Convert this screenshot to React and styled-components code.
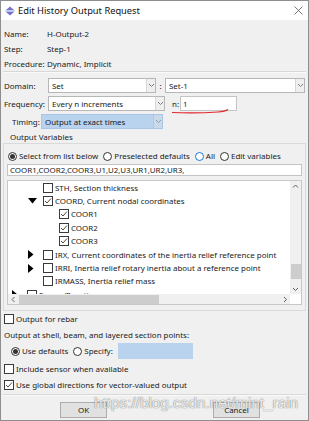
import styled, { createGlobalStyle } from "styled-components";

const GlobalStyle = createGlobalStyle`
  html, body { margin: 0; padding: 0; background: #ffffff; }
  body { font-family: "Noto Sans", "Noto Sans CJK SC", sans-serif; }
  * { box-sizing: border-box; }
`;

const Window = styled.div`
  position: relative;
  width: 309px;
  height: 421px;
  border: 1px solid #8e8e8e;
  background: #f0f0f0;
  display: flex;
  flex-direction: column;
  overflow: hidden;
  font-size: 7.95px;
  color: #1a1a1a;
`;

const TitleBar = styled.div`
  height: 19px;
  flex: none;
  background: #ffffff;
  display: flex;
  align-items: center;
  padding: 0 5px 0 4px;
  gap: 3px;
  font-size: 9.3px;
  color: #111;
`;

const TitleText = styled.span`
  flex: 1;
`;

const Body = styled.div`
  flex: 1;
  display: flex;
  flex-direction: column;
  padding: 0 2px;
`;

const Info = styled.div`
  margin-top: 6px;
  display: flex;
  flex-direction: column;
`;

const InfoRow = styled.div`
  height: 15px;
  display: flex;
  align-items: center;
  padding-left: 1px;
`;

const Label = styled.span`
  flex: none;
  width: ${(p) => p.$w}px;
`;

const Separator = styled.div`
  height: 0;
  border-top: 1px solid #d8d8d8;
  border-bottom: 1px solid #fafafa;
  margin-top: ${(p) => p.$mt || 0}px;
`;

const FieldRow = styled.div`
  height: 15px;
  display: flex;
  align-items: center;
  margin-top: ${(p) => p.$mt || 3}px;
  padding-left: ${(p) => p.$pl || 1}px;
`;

const Combo = styled.div`
  flex: ${(p) => (p.$w ? "none" : "1")};
  width: ${(p) => (p.$w ? `${p.$w}px` : "auto")};
  height: 15px;
  margin-right: ${(p) => p.$mr || 0}px;
  display: flex;
  align-items: stretch;
  border: 1px solid ${(p) => (p.$active ? "#a9c6e6" : "#b7b7b7")};
  background: ${(p) => (p.$active ? "#b9d3ef" : "#ffffff")};
`;

const ComboText = styled.span`
  flex: 1;
  display: flex;
  align-items: center;
  padding-left: 3px;
`;

const DropButton = styled.span`
  flex: none;
  width: 9px;
  display: flex;
  align-items: center;
  justify-content: center;
  background: ${(p) => (p.$active ? "#c9d9ea" : "#efefef")};
  border-left: 1px solid ${(p) => (p.$active ? "#b2c8e0" : "#d6d6d6")};
`;

const Colon = styled.span`
  width: 9px;
  text-align: center;
`;

const NLabel = styled.span`
  margin-left: 7px;
  width: 8px;
`;

const TextInput = styled.div`
  flex: ${(p) => (p.$w ? "none" : "1")};
  width: ${(p) => (p.$w ? `${p.$w}px` : "auto")};
  height: ${(p) => p.$h || 15}px;
  display: flex;
  align-items: center;
  padding-left: 2px;
  border: 1px solid ${(p) => (p.$blue ? "#b9d3ef" : "#c4c4c4")};
  background: ${(p) => (p.$blue ? "#b9d3ef" : "#ffffff")};
  margin-top: ${(p) => p.$mt || 0}px;
`;

const GroupTitle = styled.div`
  height: 12px;
  margin-top: 2px;
  padding-left: 7px;
  display: flex;
  align-items: center;
`;

const GroupBox = styled.div`
  border: 1px solid #dadada;
  padding: 6px 3px 5px 3px;
  display: flex;
  flex-direction: column;
`;

const RadioRow = styled.div`
  height: ${(p) => p.$h || 12}px;
  display: flex;
  align-items: center;
  padding-left: ${(p) => p.$pl || 1}px;
  margin-top: ${(p) => p.$mt || 0}px;
`;

const RadioItem = styled.span`
  display: inline-flex;
  align-items: center;
  gap: 2px;
  margin-right: 5px;
`;

const RadioCircle = styled.span`
  width: 9px;
  height: 9px;
  border-radius: 50%;
  border: 1px solid ${(p) => (p.$hover ? "#1979d3" : "#333333")};
  background: #ffffff;
  display: inline-flex;
  align-items: center;
  justify-content: center;
  &::after {
    content: "";
    width: 5px;
    height: 5px;
    border-radius: 50%;
    background: #333333;
    display: ${(p) => (p.$on ? "block" : "none")};
  }
`;

const Tree = styled.div`
  margin-top: 4px;
  height: 125px;
  border: 1px solid #c8c8c8;
  background: #ffffff;
  display: grid;
  grid-template-columns: 1fr 11px;
  grid-template-rows: 1fr 10px;
`;

const Viewport = styled.div`
  overflow: hidden;
  display: flex;
  flex-direction: column;
`;

const TreeRow = styled.div`
  flex: none;
  height: 13.4px;
  display: flex;
  align-items: center;
  padding-left: ${(p) => 4 + p.$level * 16}px;
  white-space: nowrap;
`;

const Expander = styled.span`
  flex: none;
  width: 15px;
  display: flex;
  align-items: center;
`;

const Box = styled.span`
  flex: none;
  width: 10px;
  height: 10px;
  border: 1px solid #3a3a3a;
  background: #ffffff;
  margin-right: 2px;
  display: inline-flex;
  align-items: center;
  justify-content: center;
`;

const VScroll = styled.div`
  background: #f0f0f0;
  display: flex;
  flex-direction: column;
`;

const HScroll = styled.div`
  background: #f0f0f0;
  display: flex;
  align-items: center;
`;

const Corner = styled.div`
  background: #ffffff;
`;

const Arrow = styled.span`
  flex: none;
  width: ${(p) => (p.$h ? 10 : 11)}px;
  height: 10px;
  display: flex;
  align-items: center;
  justify-content: center;
`;

const VTrack = styled.div`
  flex: 1;
  display: flex;
  flex-direction: column;
  align-items: center;
`;

const VThumb = styled.div`
  width: 10px;
  height: 15px;
  margin-top: 73px;
  background: #cdcdcd;
`;

const HTrack = styled.div`
  flex: 1;
  height: 100%;
  display: flex;
  align-items: center;
`;

const HThumb = styled.div`
  width: 140px;
  height: 9px;
  margin-left: 1px;
  background: #cdcdcd;
`;

const CheckRow = styled.div`
  height: 12px;
  display: flex;
  align-items: center;
  padding-left: 1px;
  margin-top: ${(p) => p.$mt || 4}px;
`;

const TextRow = styled.div`
  height: 12px;
  display: flex;
  align-items: center;
  padding-left: 1px;
  margin-top: ${(p) => p.$mt || 4}px;
`;

const ButtonBar = styled.div`
  margin-top: 6px;
  display: flex;
  padding-left: 57px;
  gap: 106px;
`;

const Button = styled.div`
  width: 47px;
  height: 16px;
  border: 1px solid #adadad;
  background: #e1e1e1;
  display: flex;
  align-items: center;
  justify-content: center;
`;

const Watermark = styled.div`
  position: absolute;
  left: 93px;
  top: 394px;
  font-family: "Liberation Sans", Arial, sans-serif;
  font-size: 15.3px;
  line-height: 1;
  color: rgba(255, 255, 255, 0.85);
  text-shadow: 0 0 1px rgba(110, 110, 110, 0.9), 0 0 1px rgba(110, 110, 110, 0.6);
  pointer-events: none;
  white-space: nowrap;
`;

const RedMark = styled.svg`
  position: absolute;
  left: 169px;
  top: 105px;
`;

function Chevron({ dir = "down", color = "#707070" }) {
  const pts = {
    down: "1,2 3.5,4.5 6,2",
    up: "1,4.5 3.5,2 6,4.5",
    left: "4.5,1 2,3.5 4.5,6",
    right: "2,1 4.5,3.5 2,6",
  }[dir];
  return (
    <svg width="7" height="7" viewBox="0 0 7 7">
      <polyline points={pts} fill="none" stroke={color} strokeWidth="1" />
    </svg>
  );
}

function Check({ on }) {
  return (
    <Box>
      {on && (
        <svg width="8" height="8" viewBox="0 0 8 8">
          <polyline points="1,4 3,6 7,1.5" fill="none" stroke="#333" strokeWidth="0.9" />
        </svg>
      )}
    </Box>
  );
}

function Triangle({ open }) {
  return open ? (
    <svg width="9" height="6" viewBox="0 0 9 6">
      <polygon points="0,0 9,0 4.5,5.5" fill="#000" />
    </svg>
  ) : (
    <svg width="6" height="9" viewBox="0 0 6 9">
      <polygon points="0,0 5.5,4.5 0,9" fill="#000" />
    </svg>
  );
}

function Combobox({ w, value, active, mr }) {
  return (
    <Combo $w={w} $active={active} $mr={mr}>
      <ComboText>{value}</ComboText>
      <DropButton $active={active}>
        <Chevron color={active ? "#8a9db3" : "#7a7a7a"} />
      </DropButton>
    </Combo>
  );
}

function Radio({ on, hover, children }) {
  return (
    <RadioItem>
      <RadioCircle $on={on} $hover={hover} />
      {children}
    </RadioItem>
  );
}

const treeItems = [
  { level: 1, text: "STH, Section thickness" },
  { level: 1, exp: "open", on: true, text: "COORD, Current nodal coordinates" },
  { level: 2, on: true, text: "COOR1" },
  { level: 2, on: true, text: "COOR2" },
  { level: 2, on: true, text: "COOR3" },
  { level: 1, exp: "closed", text: "IRX, Current coordinates of the inertia relief reference point" },
  { level: 1, exp: "closed", text: "IRRI, Inertia relief rotary inertia about a reference point" },
  { level: 1, text: "IRMASS, Inertia relief mass" },
  { level: 0, exp: "closed", text: "Forces/Reactions" },
];

function TitleIcon() {
  return (
    <svg width="10" height="10" viewBox="0 0 10 10">
      <polygon points="5,0.5 9,4 1,4" fill="#7d6fc9" />
      <polygon points="1,6 9,6 5,9.5" fill="#7d6fc9" />
      <rect x="0.5" y="4.6" width="9" height="0.9" fill="#5a8fd6" />
    </svg>
  );
}

export default function App() {
  return (
    <>
      <GlobalStyle />
      <Window>
        <TitleBar>
          <TitleIcon />
          <TitleText>Edit History Output Request</TitleText>
          <svg width="9" height="9" viewBox="0 0 9 9">
            <path d="M0.5 0.5 L8.5 8.5 M8.5 0.5 L0.5 8.5" stroke="#555" strokeWidth="0.8" />
          </svg>
        </TitleBar>
        <Body>
          <Info>
            <InfoRow>
              <Label $w={43}>Name:</Label>H-Output-2
            </InfoRow>
            <InfoRow>
              <Label $w={43}>Step:</Label>Step-1
            </InfoRow>
            <InfoRow>
              <Label $w={43}>Procedure:</Label>Dynamic, Implicit
            </InfoRow>
          </Info>
          <Separator />
          <FieldRow $mt={5}>
            <Label $w={44}>Domain:</Label>
            <Combobox w={108} value="Set" />
            <Colon>:</Colon>
            <Combobox value="Set-1" mr={1} />
          </FieldRow>
          <FieldRow>
            <Label $w={44}>Frequency:</Label>
            <Combobox w={117} value="Every n increments" />
            <NLabel>n:</NLabel>
            <TextInput $w={57}>1</TextInput>
          </FieldRow>
          <FieldRow $pl={9}>
            <Label $w={29}>Timing:</Label>
            <Combobox w={122} value="Output at exact times" active />
          </FieldRow>
          <GroupTitle>Output Variables</GroupTitle>
          <GroupBox>
            <RadioRow>
              <Radio on>Select from list below</Radio>
              <Radio>Preselected defaults</Radio>
              <Radio hover>All</Radio>
              <Radio>Edit variables</Radio>
            </RadioRow>
            <TextInput $mt={2}>COOR1,COOR2,COOR3,U1,U2,U3,UR1,UR2,UR3,</TextInput>
            <Tree>
              <Viewport>
                {treeItems.map((it) => (
                  <TreeRow key={it.text} $level={it.level}>
                    <Expander>{it.exp && <Triangle open={it.exp === "open"} />}</Expander>
                    <Check on={it.on} />
                    {it.text}
                  </TreeRow>
                ))}
              </Viewport>
              <VScroll>
                <Arrow>
                  <Chevron dir="up" color="#606060" />
                </Arrow>
                <VTrack>
                  <VThumb />
                </VTrack>
                <Arrow>
                  <Chevron dir="down" color="#606060" />
                </Arrow>
              </VScroll>
              <HScroll>
                <Arrow $h>
                  <Chevron dir="left" color="#606060" />
                </Arrow>
                <HTrack>
                  <HThumb />
                </HTrack>
                <Arrow $h>
                  <Chevron dir="right" color="#606060" />
                </Arrow>
              </HScroll>
              <Corner />
            </Tree>
          </GroupBox>
          <CheckRow $mt={2}>
            <Check />
            Output for rebar
          </CheckRow>
          <TextRow>Output at shell, beam, and layered section points:</TextRow>
          <RadioRow $h={16} $pl={8} $mt={2}>
            <Radio on>Use defaults</Radio>
            <Radio>Specify:</Radio>
            <TextInput $w={75} $h={16} $blue />
          </RadioRow>
          <CheckRow>
            <Check />
            Include sensor when available
          </CheckRow>
          <CheckRow>
            <Check on />
            Use global directions for vector-valued output
          </CheckRow>
          <Separator $mt={3} />
          <ButtonBar>
            <Button>OK</Button>
            <Button>Cancel</Button>
          </ButtonBar>
        </Body>
        <RedMark width="62" height="10" viewBox="0 0 62 10">
          <path d="M2 6.5 Q 25 7.5 48 6 Q 55 5.5 58 3.5" fill="none" stroke="#e3262b" strokeWidth="1.2" />
        </RedMark>
        <Watermark>https://blog.csdn.net/mint_rain</Watermark>
      </Window>
    </>
  );
}
